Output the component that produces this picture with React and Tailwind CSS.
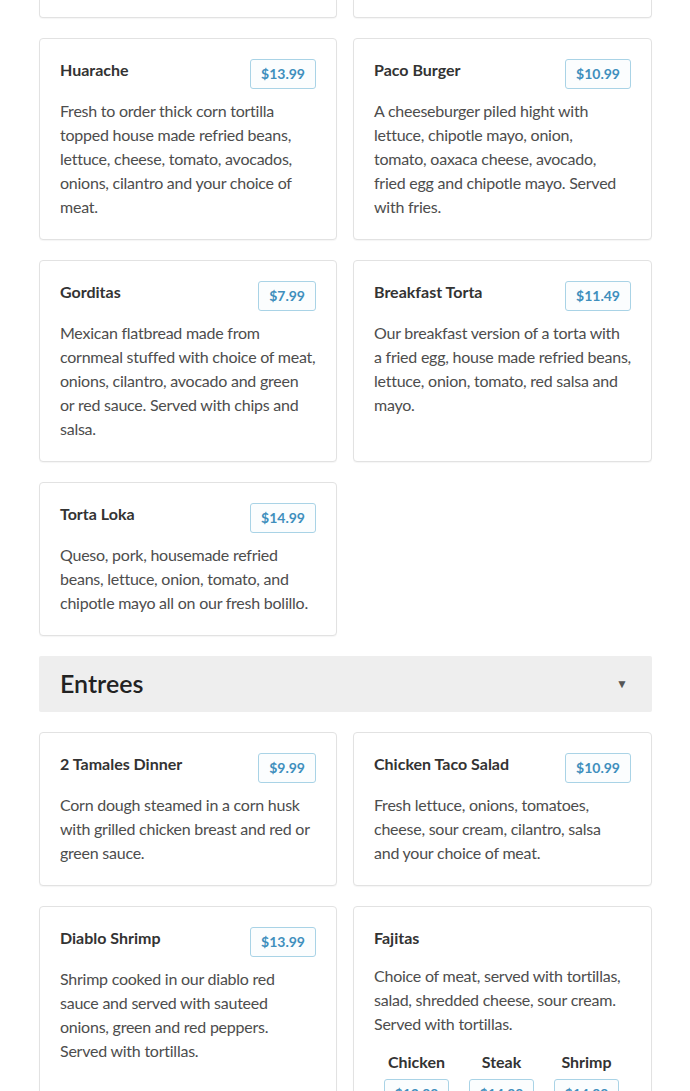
const breakfast = [
  {
    name: 'Huarache',
    price: '$13.99',
    lines: [
      'Fresh to order thick corn tortilla',
      'topped house made refried beans,',
      'lettuce, cheese, tomato, avocados,',
      'onions, cilantro and your choice of',
      'meat.',
    ],
  },
  {
    name: 'Paco Burger',
    price: '$10.99',
    lines: [
      'A cheeseburger piled hight with',
      'lettuce, chipotle mayo, onion,',
      'tomato, oaxaca cheese, avocado,',
      'fried egg and chipotle mayo. Served',
      'with fries.',
    ],
  },
  {
    name: 'Gorditas',
    price: '$7.99',
    lines: [
      'Mexican flatbread made from',
      'cornmeal stuffed with choice of meat,',
      'onions, cilantro, avocado and green',
      'or red sauce. Served with chips and',
      'salsa.',
    ],
  },
  {
    name: 'Breakfast Torta',
    price: '$11.49',
    lines: [
      'Our breakfast version of a torta with',
      'a fried egg, house made refried beans,',
      'lettuce, onion, tomato, red salsa and',
      'mayo.',
    ],
  },
  {
    name: 'Torta Loka',
    price: '$14.99',
    lines: [
      'Queso, pork, housemade refried',
      'beans, lettuce, onion, tomato, and',
      'chipotle mayo all on our fresh bolillo.',
    ],
  },
];

const entrees = [
  {
    name: '2 Tamales Dinner',
    price: '$9.99',
    lines: [
      'Corn dough steamed in a corn husk',
      'with grilled chicken breast and red or',
      'green sauce.',
    ],
  },
  {
    name: 'Chicken Taco Salad',
    price: '$10.99',
    lines: [
      'Fresh lettuce, onions, tomatoes,',
      'cheese, sour cream, cilantro, salsa',
      'and your choice of meat.',
    ],
  },
  {
    name: 'Diablo Shrimp',
    price: '$13.99',
    lines: [
      'Shrimp cooked in our diablo red',
      'sauce and served with sauteed',
      'onions, green and red peppers.',
      'Served with tortillas.',
    ],
  },
  {
    name: 'Fajitas',
    lines: [
      'Choice of meat, served with tortillas,',
      'salad, shredded cheese, sour cream.',
      'Served with tortillas.',
    ],
    options: [
      { label: 'Chicken', price: '$12.99' },
      { label: 'Steak', price: '$14.99' },
      { label: 'Shrimp', price: '$14.99' },
    ],
  },
];

function Price({ children }) {
  return (
    <span className="inline-flex items-center h-[30px] px-[10px] rounded-[3px] border border-[#a9d3e6] bg-[#fbfdfe] text-[14px] font-bold text-[#3f8fbd] leading-none">
      {children}
    </span>
  );
}

function MenuCard({ item }) {
  return (
    <div className="border border-[#e2e2e2] rounded-[4px] bg-white p-5 shadow-[0_1px_1px_rgba(0,0,0,0.04)]">
      {item.options ? (
        <h3 className="text-[16px] leading-[22px] font-bold text-[#333]">{item.name}</h3>
      ) : (
        <div className="flex justify-between items-start h-[30px]">
          <h3 className="text-[16px] leading-[22px] font-bold text-[#333]">{item.name}</h3>
          <Price>{item.price}</Price>
        </div>
      )}
      <p
        className={`${item.options ? 'mt-[15px]' : 'mt-[10px]'} text-[16px] leading-[24px] tracking-[-0.24px] text-[#4d4d4d]`}
      >
        {item.lines.map((line, i) => (
          <span key={i} className="block whitespace-nowrap">
            {line}
          </span>
        ))}
      </p>
      {item.options && (
        <div className="grid grid-cols-3 w-[255px] mt-[15px]">
          {item.options.map((o) => (
            <div key={o.label} className="flex flex-col items-center gap-[6px]">
              <span className="text-[16px] leading-[22px] font-bold text-[#333]">{o.label}</span>
              <Price>{o.price}</Price>
            </div>
          ))}
        </div>
      )}
    </div>
  );
}

export default function App() {
  return (
    <div className="bg-white min-h-screen font-['Lato','Noto_Sans',sans-serif]">
      <div className="w-[613px] ml-[39px] pb-10">
        {/* tail of the row above */}
        <div className="grid grid-cols-[298px_299px] gap-x-4">
          <div className="h-[18px] border-x border-b border-[#e2e2e2] rounded-b-[4px] shadow-[0_1px_1px_rgba(0,0,0,0.04)]" />
          <div className="h-[18px] border-x border-b border-[#e2e2e2] rounded-b-[4px] shadow-[0_1px_1px_rgba(0,0,0,0.04)]" />
        </div>

        <div className="grid grid-cols-[298px_299px] gap-x-4 gap-y-5 mt-5">
          {breakfast.map((item) => (
            <MenuCard key={item.name} item={item} />
          ))}
        </div>

        <div className="mt-5 h-[56px] bg-[#eeeeee] rounded-[2px] flex items-center justify-between pl-[21px] pr-[24px]">
          <h2 className="text-[25px] font-semibold text-[#222]">Entrees</h2>
          <span className="text-[12px] text-[#555]">▼</span>
        </div>

        <div className="grid grid-cols-[298px_299px] gap-x-4 gap-y-5 mt-5">
          {entrees.map((item) => (
            <MenuCard key={item.name} item={item} />
          ))}
        </div>
      </div>
    </div>
  );
}
